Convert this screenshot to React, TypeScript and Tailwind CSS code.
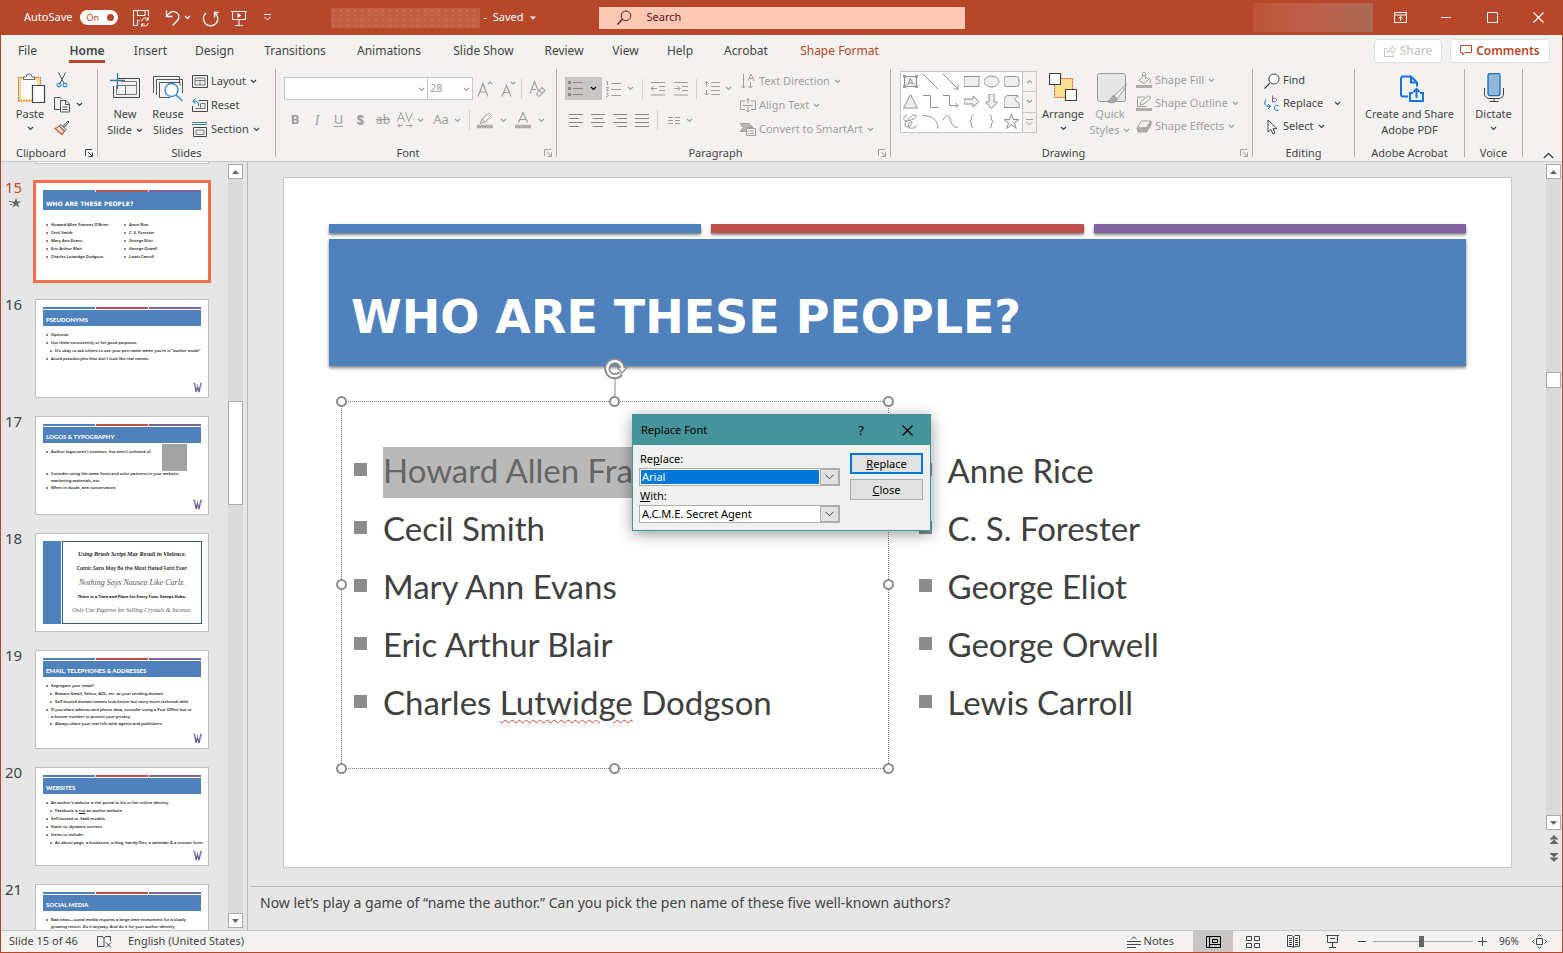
import type { ReactNode } from "react";

function Svg({ w, h, className = "", children }: { w: number; h: number; className?: string; children: ReactNode }) {
  return (
    <svg width={w} height={h} viewBox={`0 0 ${w} ${h}`} fill="none" stroke="currentColor" className={`shrink-0 ${className}`} aria-hidden="true">
      {children}
    </svg>
  );
}

function Chevron({ className = "" }: { className?: string }) {
  return (
    <Svg w={7} h={5} className={className}>
      <path d="M1 1 3.500 3.500 6 1" strokeWidth="1.200" />
    </Svg>
  );
}

function Separator() {
  return <div className="w-px h-[88px] bg-[#b3b0ad] shrink-0"></div>;
}

function Divider({ className = "" }: { className?: string }) {
  return <div className={`w-px h-5 bg-[#d2d0ce] shrink-0 ${className}`}></div>;
}

function Group({ label, width, launcher, dim, children }: { label: string; width: string; launcher?: boolean; dim?: boolean; children: ReactNode }) {
  return (
    <section className={`flex flex-col shrink-0 h-[92px] ${width}`}>
      <div className="flex h-[72px]">{children}</div>
      <div className="flex items-center h-5 pt-1">
        <span className="flex-1 text-center">{label}</span>
        {launcher && (
          <button aria-label={`${label} settings`} className={`w-4 flex justify-center ${dim ? "text-[#a19f9d]" : "text-[#444]"}`}>
            <Svg w={8} h={8}>
              <path d="M.5 7V.5H7M3 3l4 4M7.5 3.5v4h-4" />
            </Svg>
          </button>
        )}
      </div>
    </section>
  );
}

function BigButton({ icon, lines, width, chevron, dim }: { icon: ReactNode; lines: string[]; width: string; chevron?: "inline" | "below"; dim?: boolean }) {
  return (
    <button className={`flex flex-col items-center pt-1 shrink-0 ${width} ${dim ? "text-[#a19f9d]" : ""}`}>
      <span className="h-[33px] flex items-start justify-center">{icon}</span>
      {lines.map((line, i) => (
        <span key={line} className="leading-4 flex items-center gap-1 whitespace-nowrap">
          {line}
          {chevron === "inline" && i === lines.length - 1 && <Chevron />}
        </span>
      ))}
      {chevron === "below" && <Chevron className="mt-1" />}
    </button>
  );
}

function RowButton({ icon, text, chevron, dim, height = "h-6", gap = "gap-1" }: { icon: ReactNode; text: string; chevron?: boolean; dim?: boolean; height?: string; gap?: string }) {
  return (
    <button className={`flex items-center whitespace-nowrap ${height} ${dim ? "text-[#a19f9d]" : ""}`}>
      <span className="w-5 flex justify-center mr-px">{icon}</span>
      <span className={`flex items-center ${gap}`}>
        {text}
        {chevron && <Chevron />}
      </span>
    </button>
  );
}

function Tool({ label, width, children }: { label: string; width: string; children: ReactNode }) {
  return (
    <button aria-label={label} className={`flex items-center justify-center shrink-0 h-[22px] ${width}`}>
      {children}
    </button>
  );
}

function TitleBar() {
  return (
    <header className="h-[35px] shrink-0 bg-[#b7472a] text-white grid grid-cols-[1fr_366px_1fr] items-center">
      <div className="flex items-center pl-[23px]">
        <label htmlFor="autosave">AutoSave</label>
        <button id="autosave" role="switch" aria-checked="true" className="ml-2 w-[38px] h-[15px] rounded-full bg-white text-[#b7472a] text-[9px] flex items-center justify-between pl-1.5 pr-1">
          On
          <span className="size-[7px] rounded-full bg-[#b7472a]"></span>
        </button>
        <Tool label="Save" width="w-[46px]">
          <Svg w={18} h={18}>
            <path d="M6 16.500H1.500v-15h15V7M5.500 1.500v5h7.500v-5M5.500 16.500V11.500H8M9.500 12a4 4 0 0 1 7-1.500M16.500 8v3h-3M16.500 14a4 4 0 0 1-7 1.500M9.500 18v-3h3" />
          </Svg>
        </Tool>
        <Tool label="Undo" width="w-4">
          <Svg w={15} h={17}>
            <path d="M1.500 1.500v6h6M1.500 7.500C4 3.500 7.500 2 10.500 3c4 1.500 4.500 6 1.500 9l-4.500 4.500" strokeWidth="1.300" />
          </Svg>
        </Tool>
        <Chevron className="ml-1" />
        <Tool label="Redo" width="w-[38px]">
          <Svg w={18} h={18}>
            <path d="M4.500 3.500a7.200 7.200 0 1 0 8.500.5M4.500 8.500V3.500h-4" strokeWidth="1.300" transform="matrix(-1 0 0 1 18 0)" />
          </Svg>
        </Tool>
        <Tool label="Start from beginning" width="w-5">
          <Svg w={16} h={16}>
            <path d="M0 1.500h16M1.500 1.500v8h13v-8M8 10v5M4 15.500h8" />
            <path d="M6.500 3v5l4-2.500z" fill="currentColor" stroke="none" />
          </Svg>
        </Tool>
        <Tool label="Customize toolbar" width="w-[37px]">
          <Svg w={7} h={7}>
            <path d="M0 .5h7M.5 3l3 3 3-3" />
          </Svg>
        </Tool>
        <div className="ml-[45px] w-[149px] h-5 bg-[#c25f45] bg-[radial-gradient(#cb7962_1px,transparent_1px)] bg-[length:7px_5px]"></div>
        <span className="ml-[3px] whitespace-nowrap">-&nbsp; Saved</span>
        <Svg w={6} h={4} className="ml-1.5">
          <path d="M0 .5h6L3 3.500z" fill="currentColor" stroke="none" />
        </Svg>
      </div>
      <label className="h-[22px] bg-[#fdc8b4] text-[#6b1020] flex items-center pl-[18px] gap-[15px]">
        <Svg w={15} h={15}>
          <circle cx="9" cy="5.800" r="4.800" />
          <path d="M5.500 9.200.5 14.500" strokeWidth="1.300" />
        </Svg>
        <input type="text" placeholder="Search" aria-label="Search" className="flex-1 bg-transparent outline-none placeholder-[#6b1020]" />
      </label>
      <div className="flex items-center justify-end">
        <div className="w-[120px] h-[29px] bg-gradient-to-r from-[#bd5439] via-[#c0604a] to-[#ab6a56] mr-1"></div>
        <Tool label="Ribbon display options" width="w-[46px]">
          <Svg w={13} h={11}>
            <path d="M.5.500h12v10H.500zM.500 3h12M6.500 9V4.500M4.500 6.500l2-2 2 2" />
          </Svg>
        </Tool>
        <Tool label="Minimize" width="w-[46px]">
          <Svg w={10} h={1}><path d="M0 .5h10" /></Svg>
        </Tool>
        <Tool label="Maximize" width="w-[46px]">
          <Svg w={11} h={11}><path d="M.5.5h10v10H.5z" /></Svg>
        </Tool>
        <Tool label="Close" width="w-[47px]">
          <Svg w={11} h={11}><path d="m.5.5 10 10M10.500.5l-10 10" strokeWidth="1.200" /></Svg>
        </Tool>
      </div>
    </header>
  );
}

const tabs = [
  { name: "File", width: "w-[51px]" },
  { name: "Home", width: "w-[68px]" },
  { name: "Insert", width: "w-[59px]" },
  { name: "Design", width: "w-[69px]" },
  { name: "Transitions", width: "w-[92px]" },
  { name: "Animations", width: "w-[96px]" },
  { name: "Slide Show", width: "w-[93px]" },
  { name: "Review", width: "w-[68px]" },
  { name: "View", width: "w-[55px]" },
  { name: "Help", width: "w-[54px]" },
  { name: "Acrobat", width: "w-[78px]" },
  { name: "Shape Format", width: "w-[109px]" },
];

function TabRow() {
  return (
    <nav className="h-[31px] shrink-0 flex items-center justify-between pl-px pr-3 text-[12px]">
      <div className="flex h-full">
        {tabs.map((tab) => (
          <button key={tab.name} className={`flex justify-center pt-1 shrink-0 whitespace-nowrap ${tab.width} ${tab.name === "Shape Format" ? "text-[#b7472a]" : ""}`}>
            <span className={`h-6 leading-6 ${tab.name === "Home" ? "font-semibold border-b-3 border-[#b7472a]" : ""}`}>{tab.name}</span>
          </button>
        ))}
      </div>
      <div className="flex gap-2 font-medium">
        <button className="w-[68px] h-6 rounded-sm border border-[#e1dfdd] bg-white text-[#c8c6c4] flex items-center justify-center gap-1">
          <Svg w={12} h={12}>
            <path d="M3 3.500H.5v8h9V9M3.500 8c.3-3 2-4.500 4.500-4.500V1l3.500 3.500L8 8V5.800C6 5.700 4.500 6.500 3.500 8z" />
          </Svg>
          Share
        </button>
        <button className="w-[100px] h-6 rounded-sm border border-[#e1dfdd] bg-white text-[#b7472a] font-semibold flex items-center justify-center gap-1">
          <Svg w={12} h={11}>
            <path d="M.5.500h11v7H5l-2.500 2.500V7.500h-2z" />
          </Svg>
          Comments
        </button>
      </div>
    </nav>
  );
}

function ClipboardGroup() {
  return (
    <Group label="Clipboard" width="w-24" launcher>
      <div className="w-[9px]"></div>
      <BigButton
        width="w-10"
        lines={["Paste"]}
        chevron="below"
        icon={
          <Svg w={28} h={31} className="ml-1">
            <path d="M1.500 5.500h19v22h-19z" fill="#fafafa" stroke="#f5dd8b" strokeWidth="3" />
            <path d="M.5 28V4.500h22V14M.5 28h13" stroke="#d9593a" strokeDasharray="1.500 1" />
            <path d="M5.500 6.500V4H8a3 3 0 0 1 6 0h2.500v2.500z" fill="#fff" stroke="#666" />
            <path d="M14.500 12.500h12v17h-12z" fill="#fff" stroke="#444" strokeWidth="1.200" />
          </Svg>
        }
      />
      <div className="w-6">
        <Tool label="Cut" width="w-6">
          <Svg w={12} h={16}>
            <path d="m2.500.5 5.500 11M9.500.5 4 11.500" stroke="#555" />
            <circle cx="3" cy="13" r="2" stroke="#0078d4" />
            <circle cx="9" cy="13" r="2" stroke="#0078d4" />
          </Svg>
        </Tool>
        <div className="h-0.5"></div>
        <Tool label="Copy" width="w-6">
          <Svg w={17} h={17}>
            <path d="M6 13.500H.5V1.500H6L8 3.500M6.500 4.500h5.500l3.500 3.500v8h-9zM11.500 4.500V8.500h4M8.500 11h5M8.500 13.500h5" stroke="#555" />
          </Svg>
        </Tool>
        <div className="h-0.5"></div>
        <Tool label="Format painter" width="w-6">
          <Svg w={16} h={16}>
            <path d="M1 8.500 5.500 6l5 5L8 14.500z" fill="#fbd3c8" stroke="#e2603d" strokeWidth="1.300" />
            <path d="m5.500 6 1.500-1.500 5 5-1.500 1.500zM9 6.500l5-5.500 1 1-5 5.500" stroke="#444" fill="#fff" />
          </Svg>
        </Tool>
      </div>
      <div className="flex items-center w-3 h-[70px] pl-0.5"><Chevron /></div>
    </Group>
  );
}

function SlidesGroup() {
  return (
    <Group label="Slides" width="w-[177px]">
      <div className="w-1.5"></div>
      <BigButton
        width="w-[42px]"
        lines={["New", "Slide"]}
        chevron="inline"
        icon={
          <Svg w={30} h={28}>
            <path d="M8 5.500h21.500v19h-26V13" stroke="#444" />
            <path d="M11 8.500h15.500v13h-20V13M6.500 12.500h20M15.500 12.500v9" stroke="#777" />
            <path d="M7.500 0v16M0 7.500h15" stroke="#3b7f95" strokeWidth="1.300" />
          </Svg>
        }
      />
      <BigButton
        width="w-11"
        lines={["Reuse", "Slides"]}
        icon={
          <Svg w={30} h={32}>
            <path d="M.5 20V3.500h26V9M3.500 22V6.500h26V20M6.500 24.500V9.500H27V12M6.500 24.500H17" stroke="#555" />
            <circle cx="18.500" cy="17" r="6.500" fill="#fff" stroke="#2b88d8" strokeWidth="1.300" />
            <path d="m23 22 6.500 6" stroke="#2b88d8" strokeWidth="1.500" />
          </Svg>
        }
      />
      <div>
        <RowButton text="Layout" chevron icon={<Svg w={16} h={13}><path d="M.5.5h15v12H.5z" stroke="#444" /><path d="M3 3h10v7H3zM3 5.500h10M8 5.500V10" stroke="#777" /></Svg>} />
        <RowButton text="Reset" icon={<Svg w={16} h={14}><path d="M7 2.500h8.500v11H.5V8" stroke="#444" /><path d="M9 5.500h4v5H3.500M8.500 5.500v5" stroke="#777" /><path d="M3.500.5.8 3.200 3.500 6M1 3.200h2.500C6 3.200 7 5 6.500 8" stroke="#0078d4" /></Svg>} />
        <RowButton text="Section" chevron icon={<Svg w={16} h={17}><path d="M0 1.500h15M0 3.500h15" stroke="#3b7f95" /><path d="M1.500 6.500h13v9h-13z" stroke="#444" /><path d="M4 9h8v4.500H4z" stroke="#777" /></Svg>} />
      </div>
    </Group>
  );
}

function FontGroup() {
  return (
    <Group label="Font" width="w-[280px]" launcher dim>
      <div className="pl-2 pt-2 text-[#a19f9d]">
        <div className="flex items-center">
          <div className="relative w-[144px] h-[23px]">
            <select aria-label="Font name" className="appearance-none size-full border border-[#c8c6c4] bg-white" defaultValue="">
              <option value=""></option>
            </select>
            <Chevron className="absolute right-[3px] top-[10px] pointer-events-none" />
          </div>
          <div className="relative w-[46px] h-[23px] -ml-px">
            <select aria-label="Font size" className="appearance-none size-full border border-[#c8c6c4] bg-white pl-0.5" defaultValue="28">
              <option>28</option>
            </select>
            <Chevron className="absolute right-[3px] top-[10px] pointer-events-none" />
          </div>
          <Tool label="Increase font size" width="w-6">
            <Svg w={16} h={16}><path d="M1 15.500 6 2.500l5 13M3 11h6M11 3l2-2 2 2" strokeWidth="1.200" /></Svg>
          </Tool>
          <Tool label="Decrease font size" width="w-[22px]">
            <Svg w={15} h={16}><path d="M1 15.500 5.500 4.500l4.500 11M2.800 11.500h5.500M10 1l2 2 2-2" strokeWidth="1.200" /></Svg>
          </Tool>
          <Divider className="ml-0.5" />
          <Tool label="Clear formatting" width="w-[31px]">
            <Svg w={17} h={17}><path d="M1 13.500 5.500 1.500l4 10M2.800 9.500H7M8 13l5-5.500 3 3-5 5.500H9.500L8 14.500zM10.500 10.500l3 3" strokeWidth="1.100" /></Svg>
          </Tool>
        </div>
        <div className="flex items-center mt-2 h-6 text-[13px]">
          <Tool label="Bold" width="w-[22px]"><b>B</b></Tool>
          <Tool label="Italic" width="w-[22px]"><i className="font-[Liberation_Serif,serif] text-[14px]">I</i></Tool>
          <Tool label="Underline" width="w-[21px]"><u className="underline-offset-2">U</u></Tool>
          <Tool label="Shadow" width="w-[22px]"><b className="[text-shadow:1px_1px_1px_#aaa]">S</b></Tool>
          <Tool label="Strikethrough" width="w-6"><s className="text-[12px]">ab</s></Tool>
          <Tool label="Character spacing" width="w-5">
            <Svg w={16} h={16}>
              <path d="M.5 9.500 4 .5l3.500 9M1.800 6.500h4.500M8.500.5l3.500 9 3.500-9M1 13.500h5M3 11.500l-2 2 2 2M9 13.500h6M13 11.500l2 2-2 2" />
            </Svg>
          </Tool>
          <Chevron className="ml-0.5" />
          <Tool label="Change case" width="w-[26px] ml-1">Aa</Tool>
          <Chevron />
          <Divider className="ml-2" />
          <Tool label="Highlight colour" width="w-[30px]">
            <Svg w={16} h={17}>
              <path d="M3 11.500 5 7l7-6 2.500 2.500L8 10zM5 7l3 3" />
              <path d="M0 14.500h16" stroke="#b0aeac" strokeWidth="3.500" />
            </Svg>
          </Tool>
          <Chevron />
          <Tool label="Font colour" width="w-[31px]">
            <Svg w={16} h={17}>
              <path d="M3.500 10.500 8 .5l4.500 10M5 7.500h6" strokeWidth="1.200" />
              <path d="M0 14.500h16" stroke="#b0aeac" strokeWidth="3.500" />
            </Svg>
          </Tool>
          <Chevron />
        </div>
      </div>
    </Group>
  );
}

const alignments = [
  { label: "Align left", d: "M0 .5h14M0 4.500h10M0 8.500h14M0 12.500h10" },
  { label: "Center", d: "M0 .5h14M2 4.500h10M0 8.500h14M2 12.500h10" },
  { label: "Align right", d: "M0 .5h14M4 4.500h10M0 8.500h14M4 12.500h10" },
  { label: "Justify", d: "M0 .5h14M0 4.500h14M0 8.500h14M0 12.500h14" },
];

function ParagraphGroup() {
  return (
    <Group label="Paragraph" width="w-[333px]" launcher dim>
      <div className="pl-2 pt-2 w-[181px] text-[#a19f9d]">
        <div className="flex items-center h-[23px]">
          <button aria-label="Bullets" className="w-[37px] h-[23px] bg-[#c8c6c4] flex items-center justify-between pl-[3px] pr-[5px]">
            <Svg w={15} h={15}>
              <path d="M5 1.500h10M5 7.500h10M5 13.500h10" stroke="#8a8886" />
              <path d="M0 1.500h3M0 7.500h3M0 13.500h3" stroke="#8a8886" strokeWidth="3" />
            </Svg>
            <Chevron className="text-black" />
          </button>
          <Tool label="Numbering" width="w-[22px]">
            <Svg w={15} h={16}>
              <path d="M5 2.500h10M5 8.500h10M5 14.500h10M.5 1.500l1-1v4M0 6.500h2.500l-2 3h2.500M0 12h2.500l-1.500 1.500 1.500 1-1 1H0" />
            </Svg>
          </Tool>
          <Chevron className="ml-[3px]" />
          <Divider className="ml-2" />
          <Tool label="Decrease indent" width="w-[30px]">
            <Svg w={14} h={14}><path d="M0 .5h14M8 4.500h6M8 8.500h6M0 13h14M0 6.500h6M2.500 4 0 6.500 2.500 9" /></Svg>
          </Tool>
          <Tool label="Increase indent" width="w-4">
            <Svg w={14} h={14}><path d="M0 .5h14M8 4.500h6M8 8.500h6M0 13h14M0 6.500h6M3.500 4 6 6.500 3.500 9" /></Svg>
          </Tool>
          <Divider className="ml-[7px]" />
          <Tool label="Line spacing" width="w-[30px]">
            <Svg w={16} h={15}><path d="M7 1.500h9M7 5.500h9M7 9.500h9M7 13.500h9M2.500.5v5M.5 2.500l2-2 2 2M2.500 14V9M.5 12l2 2 2-2" /></Svg>
          </Tool>
          <Chevron className="-ml-0.5" />
        </div>
        <div className="flex items-center h-6 mt-2">
          {alignments.map((a) => (
            <Tool key={a.label} label={a.label} width="w-[22px]">
              <Svg w={14} h={13}><path d={a.d} stroke="#8a8886" /></Svg>
            </Tool>
          ))}
          <Divider className="ml-1" />
          <Tool label="Columns" width="w-[31px]">
            <Svg w={12} h={9}><path d="M0 1.500h5M7 1.500h5M0 4.500h5M7 4.500h5M0 7.500h5M7 7.500h5" /></Svg>
          </Tool>
          <Chevron className="-ml-[3px]" />
        </div>
      </div>
      <div>
        <RowButton dim chevron text="Text Direction" icon={<Svg w={14} h={16}><path d="M2.500 1v14M.5 13l2 2 2-2M9.500 9v6M7.500 13l2 2 2-2M7 8l3-7 3 7M8 5.500h4" /></Svg>} />
        <RowButton dim chevron text="Align Text" icon={<Svg w={16} h={15}><path d="M5 3H.5v8.500H5M11 3h4.500v8.500H11M3 7.500h10M8 .5v5M6 2.500l2-2 2 2M8 14V9M6 12l2 2 2-2" /></Svg>} />
        <RowButton dim chevron text="Convert to SmartArt" icon={<Svg w={16} h={14}><path d="M0 1.500h9l4 4H7v4H0l3.500-4z" fill="#b8b6b4" /><path d="M6.500 6.500h9v7h-9z" fill="#f3f2f1" /><path d="M8 9h1M10 9h4M8 11.500h1M10 11.500h4" /></Svg>} />
      </div>
    </Group>
  );
}

// outlines listed row by row as in the gallery
const shapes = [
  "M1.500 2.500h12v10h-12zM4.500 11 7.500 4.500l3 6.500M5.500 9h4M.5 1.500h2v2h-2zM12.500 1.500h2v2h-2zM.5 11.500h2v2h-2zM12.500 11.500h2v2h-2z",
  "M0 0l15 15",
  "M0 0l15 15M15 10.500V15h-4.500",
  "M0 2.500h15v10H0z",
  "M7.500 2c4.200 0 7.500 2.500 7.500 5.500S11.700 13 7.500 13 0 10.500 0 7.500 3.300 2 7.500 2z",
  "M2.500 2.500h10a2.500 2.500 0 0 1 2.500 2.500v5a2.500 2.500 0 0 1-2.500 2.500h-10A2.500 2.500 0 0 1 0 10V5a2.500 2.500 0 0 1 2.500-2.500z",
  "M7.500.5 14.500 14H.5z",
  "M0 1.500h7.500v12H15",
  "M0 1.500h6.500v10H15M12.500 9l2.500 2.500-2.500 2.500",
  "M0 5h9V2l6 5.500L9 13v-3H0z",
  "M5 0h5v8h3.500L7.500 14.500 1.500 8H5z",
  "M3 1.500h11l.5 1C10 3 10 7.500 13 7.500l2 1.500v4.500H0V5z",
  "M4 1C0 2 0 7 3 7S12 5 13 3s-2-3-4-1-7 5-7 8 3 4 5 2 3-4 1-4-4 4-2 5.500 5 1 8-2",
  "M0 1.500c8 0 15 4 15 13",
  "M0 6c4-7 6-5 7.500 0S11 14 15 13",
  "M9.500 1C7 1 8 3 7.500 5S6.500 7 5.500 7.500C7.500 8 7 9 7.500 11s0 3 2 3",
  "M5.500 1c2.500 0 1.500 2 2 4s1 2 2 2.500C7.500 8 8 9 7.500 11s0 3-2 3",
  "M7.500 0l2 5.500H15l-4.500 3.500L12.300 14.500 7.500 11l-4.800 3.500L4.500 9 0 5.500h5.500z",
];

function DrawingGroup() {
  return (
    <Group label="Drawing" width="w-[361px]" launcher dim>
      <div className="ml-[9px] mt-0.5 w-[137px] h-[62px] flex border border-[#c8c6c4] bg-white shrink-0 text-[#929090]">
        <div className="grid grid-cols-6 flex-1">
          {shapes.map((d) => (
            <button key={d} aria-label="Shape" className="flex items-center justify-center">
              <Svg w={16} h={16}><path d={d} fill={d.endsWith("z") ? "#efefef" : "none"} /></Svg>
            </button>
          ))}
        </div>
        <div className="w-3.5 flex flex-col border-l border-[#c8c6c4] divide-y divide-[#c8c6c4] bg-[#f3f2f1] text-[#a19f9d]">
          <button aria-label="Previous shapes" className="flex-1 flex items-center justify-center"><Chevron className="rotate-180" /></button>
          <button aria-label="Next shapes" className="flex-1 flex items-center justify-center"><Chevron /></button>
          <button aria-label="More shapes" className="flex-1 flex items-center justify-center"><Svg w={7} h={7}><path d="M0 .5h7M.5 3l3 3 3-3" /></Svg></button>
        </div>
      </div>
      <BigButton
        width="w-[52px]"
        lines={["Arrange"]}
        chevron="below"
        icon={
          <Svg w={28} h={29}>
            <path d="M5.500 5.500h18v19h-18z" fill="#f7e08f" stroke="#d9593a" strokeDasharray="2 1" />
            <path d="M.5.500h11v11H.500zM16.500 16.500h11v11h-11z" fill="#fff" stroke="#444" strokeWidth="1.200" />
          </Svg>
        }
      />
      <BigButton
        dim
        width="w-[42px]"
        lines={["Quick", "Styles"]}
        chevron="inline"
        icon={
          <Svg w={31} h={32} className="ml-1">
            <path d="M2.500.5h24a2 2 0 0 1 2 2v24a2 2 0 0 1-2 2h-24a2 2 0 0 1-2-2v-24a2 2 0 0 1 2-2z" fill="#e6e6e6" stroke="#999" />
            <path d="M29.500 11 17 23l3 3c4-5 8-10 9.500-15z" fill="#f3f2f1" stroke="#999" />
            <path d="M17 22.500c-3 .5-3 5-7 6 4 2 9 2 10-3z" fill="#aaa" stroke="#999" />
          </Svg>
        }
      />
      <div className="ml-[3px]">
        <RowButton dim chevron height="h-[23px]" text="Shape Fill" icon={<Svg w={16} h={17}><path d="M3 8.500 8 3l4.500 4.500L8 11.500zM6.500 5V1.500c0-1.500 3-1.500 3 0V7M13 6c2 2 1.500 4 1 5" /><path d="M0 14.500h16" strokeWidth="3" stroke="#b0aeac" /></Svg>} />
        <RowButton dim chevron height="h-[23px]" text="Shape Outline" icon={<Svg w={16} h={17}><path d="M9 2H1.500v9.500h9M4 10l1-3.500L12.500.8l2.500 2L8 9z" /><path d="M0 14.500h16" strokeWidth="3" stroke="#b0aeac" /></Svg>} />
        <RowButton dim chevron height="h-[23px]" text="Shape Effects" icon={<Svg w={16} h={13}><path d="M5.500 1H15L10.500 8H1z" fill="#f3f2f1" /><path d="M1 8h9.500L15 1v4l-4.500 7H2z" fill="#b0aeac" /></Svg>} />
      </div>
    </Group>
  );
}

function Ribbon() {
  return (
    <div className="h-[95px] shrink-0 flex pt-[3px] overflow-hidden">
      <ClipboardGroup />
      <Separator />
      <SlidesGroup />
      <Separator />
      <FontGroup />
      <Separator />
      <ParagraphGroup />
      <Separator />
      <DrawingGroup />
      <Separator />
      <Group label="Editing" width="w-[101px]">
        <div className="pl-[9px]">
          <RowButton height="h-[23px]" text="Find" icon={<Svg w={16} h={16}><circle cx="10" cy="6" r="5" fill="#fff" stroke="#444" /><path d="M6 10 .5 15.500" stroke="#444" strokeWidth="1.300" /></Svg>} />
          <RowButton height="h-[23px]" chevron gap="gap-[11px]" text="Replace" icon={<Svg w={16} h={17}><path d="M8.500.5v7M8.500 5c0-2.500 4-2.500 4 0s-4 2.500-4 0" stroke="#8661a8" /><path d="M14.500 11c-3-1.500-4 0-4 2s1.500 3 4 2M2 4.500c-2 3-2 7 4 7M4 9l2.500 2.500L4 14" stroke="#0078d4" /></Svg>} />
          <RowButton height="h-[23px]" chevron text="Select" icon={<Svg w={11} h={16}><path d="M1 1v12l3-2.500 2 4.500 2-1-2-4.300h4z" fill="#fff" stroke="#444" /></Svg>} />
        </div>
      </Group>
      <Separator />
      <Group label="Adobe Acrobat" width="w-[109px]">
        <BigButton
          width="w-full"
          lines={["Create and Share", "Adobe PDF"]}
          icon={
            <Svg w={24} h={29} className="ml-1">
              <path d="M8 23.500H3a2 2 0 0 1-2-2v-16a2 2 0 0 1 2-2h8l6 6v4M11 3.500v6h6" stroke="#1473e6" strokeWidth="2" />
              <path d="M13 20h-3v8h13v-8h-3M16.500 25v-8.500M13.500 19l3-3 3 3" stroke="#1473e6" strokeWidth="2" />
            </Svg>
          }
        />
      </Group>
      <Separator />
      <Group label="Voice" width="w-[57px]">
        <BigButton
          width="w-full"
          lines={["Dictate"]}
          chevron="below"
          icon={
            <Svg w={20} h={29}>
              <rect x="4" y=".6" width="12" height="22" rx="2" fill="#91b9e0" stroke="#1f6cb0" strokeWidth="1.300" />
              <path d="M.5 15v6a4.500 4.500 0 0 0 4.500 4.500h10a4.500 4.500 0 0 0 4.500-4.500v-6M10 25.500v3M5.500 28.500h9" stroke="#444" />
            </Svg>
          }
        />
      </Group>
      <Separator />
      <div className="flex-1 flex items-end justify-end pr-2 pb-0.5">
        <button aria-label="Collapse ribbon"><Svg w={11} h={7}><path d="m.8 6 4.700-4.500L10.200 6" strokeWidth="1.300" /></Svg></button>
      </div>
    </div>
  );
}

type Line = { text: string; level?: number; more?: string };
type Thumb = { n: number; title: string; lines: Line[] };

const thumbs: Thumb[] = [
  {
    n: 16,
    title: "PSEUDONYMS",
    lines: [
      { text: "Optional." },
      { text: "Use them consistently or for good purposes." },
      { text: "It’s okay to ask others to use your pen name when you’re in “author mode”", level: 1 },
      { text: "Avoid pseudonyms that don’t look like real names." },
    ],
  },
  {
    n: 17,
    title: "LOGOS & TYPOGRAPHY",
    lines: [
      { text: "Author logos aren’t common, but aren’t unheard of." },
      { text: "" },
      { text: "" },
      { text: "Consider using the same fonts and color patterns in your website,", more: "marketing materials, etc." },
      { text: "When in doubt, aim conservative." },
    ],
  },
  { n: 18, title: "", lines: [] },
  {
    n: 19,
    title: "EMAIL, TELEPHONES & ADDRESSES",
    lines: [
      { text: "Segregate your email!" },
      { text: "Beware Gmail, Yahoo, AOL, etc. as your sending domain", level: 1 },
      { text: "Self-hosted domain names look better but carry more technical debt", level: 1 },
      { text: "If you share address and phone data, consider using a Post Office box or", more: "a burner number to protect your privacy." },
      { text: "Always share your real info with agents and publishers", level: 1 },
    ],
  },
  {
    n: 20,
    title: "WEBSITES",
    lines: [
      { text: "An author’s website is the portal to his or her online identity." },
      { text: "Facebook is not an author website", level: 1 },
      { text: "Self-hosted vs. SaaS models." },
      { text: "Static vs. dynamic content." },
      { text: "Items to include:" },
      { text: "An about page, a bookstore, a blog, handy files, a calendar & a contact form", level: 1 },
    ],
  },
  {
    n: 21,
    title: "SOCIAL MEDIA",
    lines: [
      { text: "Bad news—social media requires a large time investment for a slowly", more: "growing return. Do it anyway. And do it for your author identity" },
    ],
  },
];

const authors = ["Howard Allen Frances O’Brien", "Cecil Smith", "Mary Ann Evans", "Eric Arthur Blair", "Charles Lutwidge Dodgson"];
const penNames = ["Anne Rice", "C. S. Forester", "George Eliot", "George Orwell", "Lewis Carroll"];

function ThumbBars() {
  return (
    <div className="grid grid-cols-3 gap-px h-0.5 mb-px">
      <div className="bg-[#4f81bd]"></div>
      <div className="bg-[#c0504d]"></div>
      <div className="bg-[#8064a2]"></div>
    </div>
  );
}

function MiniLine({ line }: { line: Line }) {
  if (!line.text) return <li className="h-[7px]"></li>;
  const notAt = line.text.indexOf(" not ");
  return (
    <li className={`flex gap-[3px] ${line.level ? "pl-1" : ""}`}>
      <span className="mt-[3px] size-0.5 bg-[#888] shrink-0"></span>
      <span className="whitespace-nowrap">
        {notAt < 0 ? line.text : <>{line.text.slice(0, notAt + 1)}<u>not</u>{line.text.slice(notAt + 4)}</>}
        {line.more && <span className="block leading-[6px]">{line.more}</span>}
      </span>
    </li>
  );
}

function ThumbBody({ thumb }: { thumb: Thumb }) {
  if (thumb.n === 18) {
    return (
      <div className="flex h-full gap-px p-[7px] pr-1.5">
        <div className="w-[18px] bg-[#4f81bd]"></div>
        <div className="flex-1 border border-[#2f5f85] flex flex-col items-center justify-around py-1.5 leading-[9px] whitespace-nowrap text-[#222]">
          <p className="font-[Liberation_Serif,serif] italic font-bold text-[6px]">Using Brush Script May Result in Violence.</p>
          <p className="font-semibold text-[5px]">Comic Sans May Be the Most Hated Font Ever.</p>
          <p className="font-[Liberation_Serif,serif] italic text-[8px] text-[#555]">Nothing Says Nausea Like Curlz.</p>
          <p className="font-extrabold text-[4px]">There is a Time and Place for Every Font. Except Hobo.</p>
          <p className="font-[Liberation_Serif,serif] italic text-[6px] text-[#555]">Only Use Papyrus for Selling Crystals &amp; Incense.</p>
        </div>
      </div>
    );
  }
  return (
    <div className="relative px-[7px] pt-[7px]">
      <ThumbBars />
      <div className="h-4 bg-[#4f81bd] text-white font-[Lato,sans-serif] font-black text-[6px] leading-[8px] pl-[3px] pt-1.5">{thumb.title}</div>
      <ul className="pl-[3px] pt-[5px] text-[4px] leading-[8px] font-semibold text-[#222]">
        {thumb.lines.map((line, i) => (
          <MiniLine key={i} line={line} />
        ))}
      </ul>
      {thumb.n === 17 && <div className="absolute left-[126px] top-[27px] w-[25px] h-[27px] bg-[#a3a3a3]"></div>}
      <Svg w={9} h={11} className="absolute left-[157px] top-[82px]">
        <path d="M1.500 1 3 10 4.500 4.500 6 10 8 1" stroke="#6f5a9c" strokeWidth="1.300" />
        <path d="M.5.5 2 5M8.500.5 7.500 5M4.500 2v3" stroke="#7d9fb0" />
      </Svg>
    </div>
  );
}

function ScrollArrow({ down, label }: { down?: boolean; label: string }) {
  return (
    <button aria-label={label} className="size-[15px] shrink-0 bg-white border border-[#ababab] flex items-center justify-center text-[#666]">
      <Svg w={7} h={4} className={down ? "" : "rotate-180"}><path d="M0 0h7L3.500 4z" fill="currentColor" stroke="none" /></Svg>
    </button>
  );
}

function Sidebar() {
  return (
    <aside className="w-[247px] shrink-0 flex justify-between border-r border-[#b8b8b8] overflow-hidden">
      <div className="flex flex-col">
        <div className="ml-[34px] w-[174px] h-0.5 shrink-0 bg-white border border-t-0 border-[#c0c0c0]"></div>
        <div className="flex mt-4 shrink-0">
          <div className="w-8 text-[15px] leading-[14px] text-[#d24726] pl-1">
            15
            <Svg w={12} h={10} className="ml-1 mt-1 text-[#666]">
              <path d="M7 0 8.300 3.500H12L9 5.800 10.200 9.500 7 7.300 3.800 9.500 5 5.800 2 3.500H5.700z" fill="currentColor" stroke="none" />
              <path d="M0 3.500h2M1 6.500h2" />
            </Svg>
          </div>
          <div className="w-[178px] h-[103px] border-3 border-[#f3704c] bg-white px-[7px] pt-[7px] text-[#222]">
            <ThumbBars />
            <div className="h-[18px] -mt-px bg-[#4f81bd] text-white font-[DejaVu_Sans,sans-serif] font-bold text-[6px] leading-[8px] pl-[3px] pt-2">WHO ARE THESE PEOPLE?</div>
            <div className="flex pt-[11px] pl-[3px] text-[4px] leading-[8px] font-semibold">
              <ul className="w-[78px]">
                {authors.map((a) => <MiniLine key={a} line={{ text: a }} />)}
              </ul>
              <ul>
                {penNames.map((a) => <MiniLine key={a} line={{ text: a }} />)}
              </ul>
            </div>
          </div>
        </div>
        <div className="h-4 shrink-0"></div>
        {thumbs.map((thumb) => (
          <div key={thumb.n} className="flex shrink-0 h-[117px]">
            <div className="w-[34px] pl-1 text-[15px] leading-[10px]">{thumb.n}</div>
            <div className="w-[174px] h-[99px] border border-[#c0c0c0] bg-white">
              <ThumbBody thumb={thumb} />
            </div>
          </div>
        ))}
      </div>
      <div className="w-[15px] mr-1 my-0.5 flex flex-col items-center bg-[#dadada]">
        <ScrollArrow label="Scroll up" />
        <div className="h-[222px] shrink-0"></div>
        <div className="w-[15px] h-[104px] shrink-0 bg-white border border-[#ababab]"></div>
        <div className="flex-1"></div>
        <ScrollArrow down label="Scroll down" />
      </div>
    </aside>
  );
}

const handles = [
  "left-[-6px] top-[-6px]",
  "left-1/2 -ml-[6px] top-[-6px]",
  "right-[-6px] top-[-6px]",
  "left-[-6px] top-1/2 -mt-[6px]",
  "right-[-6px] top-1/2 -mt-[6px]",
  "left-[-6px] bottom-[-6px]",
  "left-1/2 -ml-[6px] bottom-[-6px]",
  "right-[-6px] bottom-[-6px]",
];

function Bullet({ children }: { children: ReactNode }) {
  return (
    <li className="flex items-start h-[51px] whitespace-nowrap">
      <span className="mt-4 mr-4 size-[13px] bg-[#8c8c8c] shrink-0"></span>
      {children}
    </li>
  );
}

function DropArrow() {
  return (
    <span className="w-[19px] bg-[#e1e1e1] border border-[#adadad] flex items-center justify-center pointer-events-none">
      <Svg w={9} h={6}><path d="m.5.800 4 4 4-4" stroke="#444" /></Svg>
    </span>
  );
}

function ReplaceFontDialog() {
  return (
    <form role="dialog" aria-label="Replace Font" className="absolute left-[348px] top-[236px] w-[299px] border border-[#45939b] bg-[#f0f0f0] text-black shadow-[0_3px_14px_rgba(0,0,0,0.4)]">
      <div className="h-[30px] bg-[#45939b] flex items-center pl-2">
        <span className="flex-1">Replace Font</span>
        <button type="button" aria-label="Help" className="w-[46px] text-[13px] leading-4">?</button>
        <button type="button" aria-label="Close dialog" className="w-[46px] flex justify-center"><Svg w={11} h={11}><path d="m.5.5 10 10M10.500.5l-10 10" strokeWidth="1.200" /></Svg></button>
      </div>
      <div className="flex justify-between px-[7px] pt-1.5 pb-[7px]">
        <div className="w-[201px] -ml-px">
          <label htmlFor="replace" className="block h-[17px] leading-4 pl-px">Re<u>p</u>lace:</label>
          <div className="flex h-[18px] border border-[#adadad] bg-white mb-0.5">
            <select id="replace" className="flex-1 appearance-none m-px bg-[#0078d7] text-white pl-px leading-[14px]">
              <option>Arial</option>
            </select>
            <DropArrow />
          </div>
          <label htmlFor="with" className="block h-[17px] leading-4 pl-px"><u>W</u>ith:</label>
          <div className="flex h-[18px] border border-[#adadad] bg-white">
            <select id="with" className="flex-1 appearance-none m-px bg-white pl-px leading-[14px]">
              <option>A.C.M.E. Secret Agent</option>
            </select>
            <DropArrow />
          </div>
        </div>
        <div className="w-[73px] pt-0.5 flex flex-col gap-[5px]">
          <button type="button" className="h-[21px] bg-[#e1e1e1] border-2 border-[#0078d7] leading-4"><u>R</u>eplace</button>
          <button type="button" className="h-[21px] bg-[#e1e1e1] border border-[#adadad] leading-4"><u>C</u>lose</button>
        </div>
      </div>
    </form>
  );
}

function Slide() {
  return (
    <div className="relative w-full aspect-video bg-white border border-[#c6c6c6] px-[45px] pt-[46px]">
      <div className="grid grid-cols-3 gap-2.5 h-[9px] mb-1.5">
        <div className="bg-[#4f81bd] shadow-[0_2px_3px_rgba(0,0,0,0.5)]"></div>
        <div className="bg-[#c0504d] shadow-[0_2px_3px_rgba(0,0,0,0.5)]"></div>
        <div className="bg-[#8064a2] shadow-[0_2px_3px_rgba(0,0,0,0.5)]"></div>
      </div>
      <h1 className="h-[127px] bg-[#4f81bd] shadow-[0_2px_3px_rgba(0,0,0,0.5)] text-white font-[DejaVu_Sans,sans-serif] font-bold text-[46px] leading-[56px] pl-[22px] pt-[50px] whitespace-nowrap">
        WHO ARE THESE PEOPLE?
      </h1>
      <div className="grid grid-cols-2 gap-4 mt-[35px] pl-3 pr-3.5 font-[Lato,sans-serif] text-[33px] leading-[46px] text-[#404040]">
        <div className="relative h-[368px] border border-dotted border-[#7f7f7f]">
          <ul className="h-full flex flex-col justify-between pl-3 pt-[45px] pb-[38px]">
            {authors.map((name, i) => (
              <Bullet key={name}>
                {i === 0 && <span className="h-[51px] bg-[#b9b9b9] text-[#666]">{name}</span>}
                {i > 0 && i < 4 && <span>{name}</span>}
                {i === 4 && (
                  <span>
                    Charles <span className="underline decoration-wavy decoration-[#d24726] decoration-1 underline-offset-4">Lutwidge</span> Dodgson
                  </span>
                )}
              </Bullet>
            ))}
          </ul>
          <Svg w={26} h={44} className="absolute left-1/2 -ml-[13px] -top-[44px]">
            <path d="M13 20v22" stroke="#8c8c8c" />
            <path d="M18.500 15.500A7.500 7.500 0 1 1 20 9" stroke="#8c8c8c" strokeWidth="6" />
            <path d="M15.500 9.500h9.500l-5 5.500z" fill="#fff" stroke="#8c8c8c" strokeWidth="1.300" />
            <path d="M17.800 16.200A7.500 7.500 0 1 1 20.300 10.500" stroke="#fff" strokeWidth="2.400" />
          </Svg>
          {handles.map((pos) => (
            <span key={pos} className={`absolute size-[11px] rounded-full bg-white border-2 border-[#8c8c8c] ${pos}`}></span>
          ))}
        </div>
        <ul className="h-[368px] flex flex-col justify-between pl-3.5 pt-[46px] pb-[39px]">
          {penNames.map((name) => (
            <Bullet key={name}>{name}</Bullet>
          ))}
        </ul>
      </div>
      <ReplaceFontDialog />
    </div>
  );
}

function Editor() {
  return (
    <main className="flex-1 min-w-0 flex flex-col">
      <div className="flex-1 min-h-0 flex">
        <div className="flex-1 pt-[15px] pl-[35px] pr-[34px] overflow-hidden">
          <Slide />
        </div>
        <div className="w-4 flex flex-col pt-0.5 pb-[21px]">
          <div className="w-[15px] flex-1 flex flex-col bg-[#dadada]">
            <ScrollArrow label="Scroll up" />
            <div className="h-[193px] shrink-0"></div>
            <div className="w-[15px] h-4 shrink-0 bg-white border border-[#ababab]"></div>
            <div className="flex-1"></div>
            <ScrollArrow down label="Scroll down" />
          </div>
          <button aria-label="Previous slide" className="h-[19px] flex items-center justify-center text-[#666]">
            <Svg w={8} h={9}><path d="M0 4h8L4 0zM0 8.500h8l-4-4z" fill="currentColor" stroke="none" /><path d="M0 4h8M0 8.500h8" /></Svg>
          </button>
          <button aria-label="Next slide" className="h-4 flex items-center justify-center text-[#666]">
            <Svg w={8} h={9}><path d="M0 .5h8l-4 4zM0 5h8L4 9z" fill="currentColor" stroke="none" /><path d="M0 .5h8M0 5h8" /></Svg>
          </button>
        </div>
      </div>
      <div className="h-[44px] ml-0.5 border-t border-[#b8b8b8] pl-2.5 pt-[7px] text-[14px] leading-[18px] whitespace-nowrap">
        Now let’s play a game of “name the author.” Can you pick the pen name of these five well-known authors?
      </div>
    </main>
  );
}

function StatusBar() {
  return (
    <footer className="h-[22px] shrink-0 flex items-center border-t border-[#c8c6c4] pl-2 whitespace-nowrap">
      <span className="w-[88px]">Slide 15 of 46</span>
      <button aria-label="Spelling" className="w-[31px] flex">
        <Svg w={15} h={13}><path d="M7 11.500H.5v-10H5L7 3v9M7 3l2-1.500h4.500V6M9 7.500l5 5M14 7.500l-5 5" /></Svg>
      </button>
      <span>English (United States)</span>
      <div className="flex-1"></div>
      <button className="flex items-center gap-[3px] mr-[19px]">
        <Svg w={14} h={12}><path d="M0 5.500h14M0 8.500h14M0 11.500h9M4.500 3 7 .8 9.500 3" /></Svg>
        Notes
      </button>
      <button aria-label="Normal view" className="w-10 h-full bg-[#c8c6c4] flex items-center justify-center text-black">
        <Svg w={15} h={12}><path d="M.5.500h14v11H.500zM3.500.500v11M3.500 8.500h11M6.500 3.500h5v3h-5z" /></Svg>
      </button>
      <button aria-label="Slide sorter" className="w-10 flex justify-center"><Svg w={14} h={12}><path d="M.5.500h5v4h-5zM8.500.500h5v4h-5zM.5 7.500h5v4h-5zM8.500 7.500h5v4h-5z" /></Svg></button>
      <button aria-label="Reading view" className="w-10 flex justify-center"><Svg w={13} h={13}><path d="M6.500 2 5 .5H.5v11H5l1.500 1 1.500-1h4.500V.5H8zM6.500 2v10M2 3.500h3M2 5.500h3M2 7.500h3M2 9.500h3M8 3.500h3M8 5.500h3M8 7.500h3M8 9.500h3" /></Svg></button>
      <button aria-label="Slide show" className="w-[38px] flex justify-center"><Svg w={13} h={13}><path d="M0 .5h13M1.500.5v7h10v-7M4 3.500h5M6.500 8v4M3 12.500h7" /></Svg></button>
      <button aria-label="Zoom out" className="w-[22px] flex justify-center"><Svg w={8} h={1}><path d="M0 .5h8" /></Svg></button>
      <input
        type="range"
        aria-label="Zoom"
        defaultValue="48"
        className="w-[100px] h-3 appearance-none bg-[linear-gradient(#a6a6a6,#a6a6a6)] bg-[length:100%_1px] bg-center bg-no-repeat [&::-webkit-slider-thumb]:appearance-none [&::-webkit-slider-thumb]:w-[5px] [&::-webkit-slider-thumb]:h-[11px] [&::-webkit-slider-thumb]:bg-[#666]"
      />
      <button aria-label="Zoom in" className="w-[18px] flex justify-center"><Svg w={9} h={9}><path d="M0 4.500h9M4.500 0v9" /></Svg></button>
      <span className="w-[33px] pl-2 text-[10px]">96%</span>
      <button aria-label="Fit slide" className="w-[30px] mr-2 flex justify-center"><Svg w={15} h={15}><path d="M4.500 4.500h6v6h-6zM5.500 2.500l2-2 2 2M5.500 12.500l2 2 2-2M2.500 5.500l-2 2 2 2M12.500 5.500l2 2-2 2" /></Svg></button>
    </footer>
  );
}

export default function App() {
  return (
    <div className="h-screen flex flex-col overflow-hidden border border-t-0 border-[#b7472a] bg-[#f3f2f1] text-[#444] text-[11px] font-['Noto_Sans','Open_Sans',sans-serif]">
      <TitleBar />
      <TabRow />
      <Ribbon />
      <div className="flex-1 min-h-0 flex bg-[#e6e6e6] border-t border-[#c8c6c4]">
        <Sidebar />
        <Editor />
      </div>
      <StatusBar />
    </div>
  );
}
